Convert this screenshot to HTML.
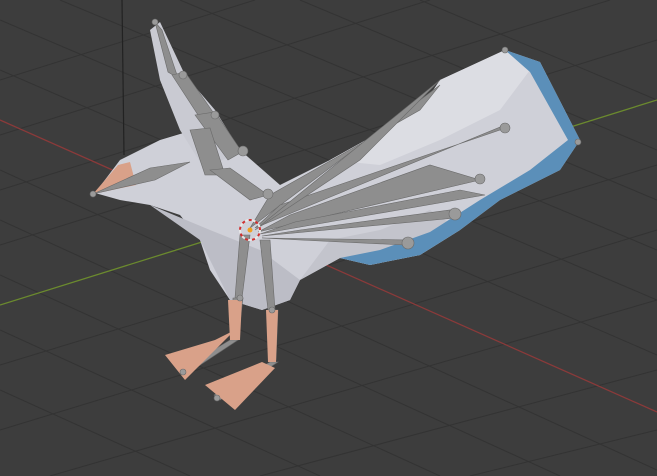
<!DOCTYPE html>
<html><head><meta charset="utf-8"><style>
html,body{margin:0;padding:0;background:#3d3d3d;width:657px;height:476px;overflow:hidden}
svg{display:block}
</style></head><body>
<svg width="657" height="476" viewBox="0 0 657 476" xmlns="http://www.w3.org/2000/svg">
<rect width="657" height="476" fill="#3d3d3d"/>
<g stroke="#333333" stroke-width="1" fill="none">
<line x1="0" y1="20" x2="657" y2="300"/>
<line x1="0" y1="70" x2="657" y2="355"/>
<line x1="0" y1="170" x2="657" y2="470"/>
<line x1="0" y1="220" x2="560" y2="476"/>
<line x1="0" y1="275" x2="440" y2="476"/>
<line x1="0" y1="330" x2="320" y2="476"/>
<line x1="0" y1="390" x2="190" y2="476"/>
<line x1="60" y1="0" x2="657" y2="250"/>
<line x1="180" y1="0" x2="657" y2="200"/>
<line x1="300" y1="0" x2="657" y2="150"/>
<line x1="420" y1="0" x2="657" y2="100"/>
<line x1="0" y1="245" x2="657" y2="40"/>
<line x1="0" y1="190" x2="610" y2="0"/>
<line x1="0" y1="135" x2="430" y2="0"/>
<line x1="0" y1="80" x2="255" y2="0"/>
<line x1="0" y1="365" x2="657" y2="165"/>
<line x1="0" y1="430" x2="657" y2="230"/>
<line x1="50" y1="476" x2="657" y2="300"/>
<line x1="260" y1="476" x2="657" y2="370"/>
<line x1="470" y1="476" x2="657" y2="430"/>
</g>
<line x1="122" y1="0" x2="124" y2="155" stroke="#222" stroke-width="1.2"/>
<line x1="0" y1="120" x2="657" y2="412" stroke="#8a3a3a" stroke-width="1.3"/>
<line x1="0" y1="305" x2="657" y2="100" stroke="#6b8a2e" stroke-width="1.3"/>

<polygon fill="#cfd0d8" points="95,193 120,160 160,140 200,128 240,150 280,185 330,160 420,110 440,80 505,50 540,62 580,140 560,170 500,200 460,230 420,255 370,265 340,258 300,280 290,300 262,310 230,300 210,270 200,240 180,215 150,205 120,200"/>
<polygon fill="#bcbdc6" points="150,205 200,240 230,300 262,310 290,300 300,280 260,250 210,230"/>
<polygon fill="#dcdde3" points="330,160 420,110 440,80 505,50 530,70 500,110 440,140 380,165"/>
<polygon fill="#c3c4cc" points="300,280 340,258 370,265 420,255 460,230 430,210 380,230 330,240"/>
<polygon fill="#5b8fb9" points="505,50 540,62 580,140 560,170 500,200 460,230 420,255 370,265 340,258 380,250 430,232 480,200 530,170 568,140 530,72"/>
<polygon fill="#d9a189" points="93,194 118,165 130,162 136,185"/>
<polygon fill="#c9cad2" points="150,30 160,22 185,75 215,110 240,150 205,170 180,130 160,80"/>

<g fill="#8e8e8e" stroke="#6a6a6a" stroke-width="0.6">
<polygon points="93,194 150,168 190,162 155,180"/>
<polygon points="155,22 162,30 178,78 168,72"/>
<polygon points="172,75 185,72 215,115 200,118"/>
<polygon points="195,115 215,112 242,152 228,160"/>
<polygon points="190,130 210,128 225,175 205,175"/>
<polygon points="210,170 230,168 268,195 250,200"/>
<polygon points="250,228 270,195 420,110 440,85"/>
<polygon points="255,228 280,205 500,130 505,125"/>
<polygon points="255,230 285,210 360,160 440,80"/>
<polygon points="258,232 290,215 430,165 480,180"/>
<polygon points="260,234 295,222 460,190 485,195"/>
<polygon points="262,236 300,230 450,210 455,218"/>
<polygon points="262,238 300,240 405,245 410,240"/>
<polygon points="240,235 250,235 242,298 235,298"/>
<polygon points="260,240 270,240 275,310 268,310"/>
<polygon points="233,298 243,298 238,340 232,340"/>
<polygon points="268,310 278,310 276,360 270,360"/>
<polygon points="230,340 238,340 185,375 180,370"/>
<polygon points="270,362 278,362 220,400 214,395"/>
</g>
<polygon fill="#d9a189" points="165,355 215,340 235,330 185,380"/>
<polygon fill="#d9a189" points="205,385 262,362 275,368 235,410"/>
<polygon fill="#d9a189" points="228,300 242,300 240,340 230,340"/>
<polygon fill="#d9a189" points="266,310 278,310 276,362 268,362"/>

<g fill="#9a9a9a" stroke="#6a6a6a" stroke-width="0.6">
<circle cx="155" cy="22" r="3"/><circle cx="183" cy="75" r="4"/><circle cx="215" cy="115" r="4"/>
<circle cx="243" cy="151" r="5"/><circle cx="268" cy="194" r="5"/><circle cx="505" cy="128" r="5"/>
<circle cx="480" cy="179" r="5"/><circle cx="455" cy="214" r="6"/><circle cx="408" cy="243" r="6"/>
<circle cx="505" cy="50" r="3"/><circle cx="578" cy="142" r="3"/><circle cx="93" cy="194" r="3"/>
<circle cx="240" cy="298" r="3"/><circle cx="272" cy="310" r="3"/><circle cx="183" cy="372" r="3"/><circle cx="217" cy="398" r="3"/>
</g>
<circle cx="250" cy="230" r="10" fill="none" stroke="#e8e8e8" stroke-width="2" stroke-dasharray="4 3"/>
<circle cx="250" cy="230" r="10" fill="none" stroke="#d03030" stroke-width="2" stroke-dasharray="3 4" stroke-dashoffset="3.5"/>
<circle cx="250" cy="230" r="2.5" fill="#f0a020"/>
</svg>
</body></html>
